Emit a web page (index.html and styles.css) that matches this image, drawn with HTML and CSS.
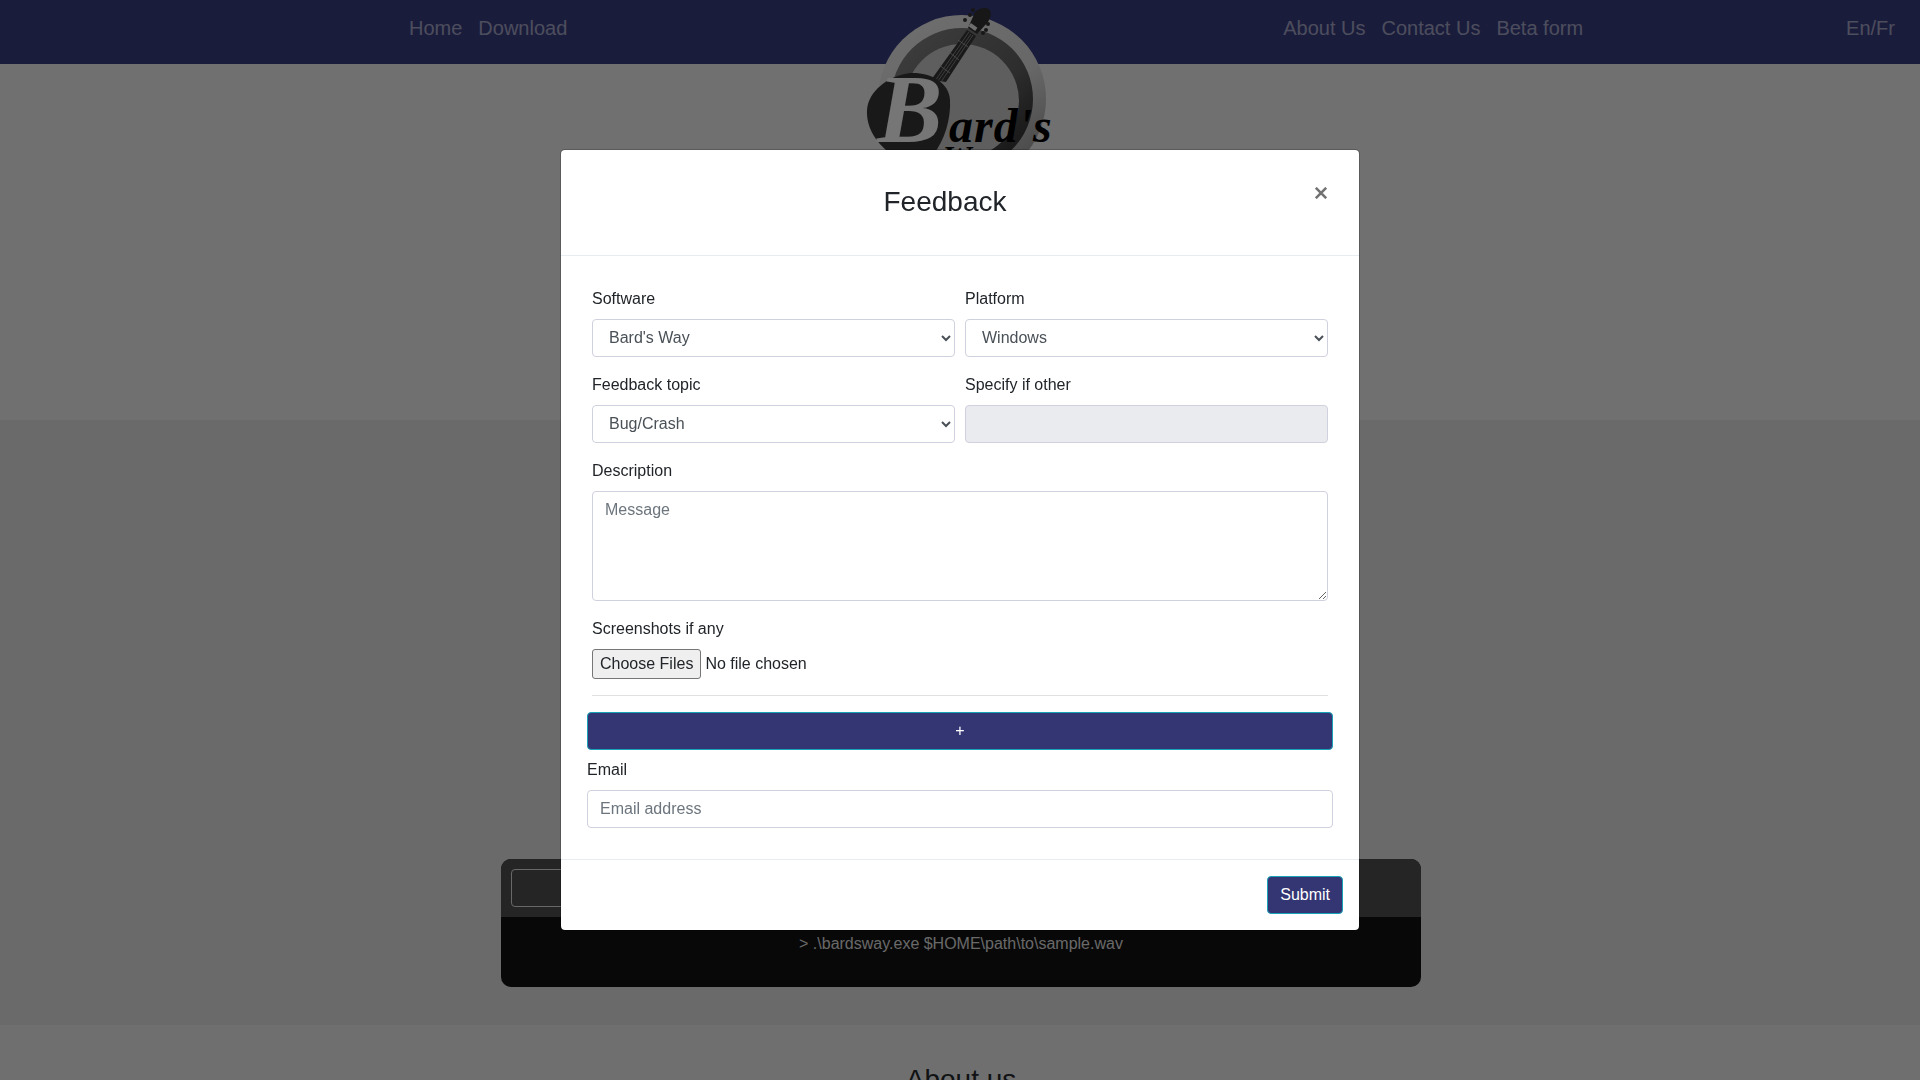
FILE: index.html
```html
<!DOCTYPE html>
<html lang="en">
<head>
<meta charset="utf-8">
<title>Bard's Way</title>
<link rel="stylesheet" href="styles.css">
</head>
<body>
<nav class="nav">
  <div class="nav-group nav-left">
    <a class="nav-link">Home</a>
    <a class="nav-link">Download</a>
  </div>
  <div class="nav-group nav-right">
    <a class="nav-link">About Us</a>
    <a class="nav-link">Contact Us</a>
    <a class="nav-link">Beta form</a>
  </div>
  <a class="nav-link nav-lang">En/Fr</a>
</nav>

<svg class="logo" viewBox="0 0 200 170" width="200" height="170" aria-label="Bard's Way logo">
  <defs>
    <linearGradient id="outer" x1="0.2" y1="0" x2="0.8" y2="1">
      <stop offset="0" stop-color="#dcdcdc"/>
      <stop offset="0.55" stop-color="#cfcfcf"/>
      <stop offset="1" stop-color="#8a8a8a"/>
    </linearGradient>
    <linearGradient id="ring" x1="0" y1="0" x2="1" y2="1">
      <stop offset="0" stop-color="#808080"/>
      <stop offset="0.6" stop-color="#5a5a5a"/>
      <stop offset="1" stop-color="#1c1c1c"/>
    </linearGradient>
  </defs>
  <circle cx="97" cy="99" r="84" fill="url(#outer)"/>
  <circle cx="97" cy="99" r="71" fill="url(#ring)"/>
  <circle cx="97" cy="101" r="57" fill="#bcbcbc"/>
  <path d="M66 80 L102 30 L111 36 L81 82 Z" fill="#333"/>
  <path d="M70 81 L104 32 M73 81 L106 34 M76 82 L108 35" stroke="#aaa" stroke-width=".6" fill="none"/>
  <path d="M74 65 L85 73 M84 52 L94 60 M93 40 L103 47" stroke="#aaa" stroke-width=".7"/>
  <path d="M103 28 L110 12 Q117 6 124 9 Q128 14 123 22 L112 34 Z" fill="#2e2e2e"/>
  <rect x="104" y="25" width="8" height="4" transform="rotate(35 108 27)" fill="#ddd"/>
  <g fill="#2e2e2e">
    <circle cx="100" cy="20" r="2"/><circle cx="105" cy="15" r="2"/><circle cx="108" cy="10" r="2"/>
    <circle cx="123" cy="24" r="2"/><circle cx="121" cy="30" r="2"/><circle cx="118" cy="33" r="2"/>
  </g>
  <path d="M45 73 C65 72 84 82 85 100 C86 118 80 140 68 155 L28 155 C12 145 1 128 2 110 C3 92 22 76 45 73 Z" fill="#333"/>
  <text class="logo-b" x="12" y="142">B</text>
  <text class="logo-ard" x="84" y="142">ard's</text>
  <text class="logo-way" x="78" y="168">Way</text>
</svg>

<header class="hero"></header>

<section class="band">
  <div class="term">
    <div class="term-head"><div class="term-field"></div></div>
    <div class="term-body">&gt; .\bardsway.exe $HOME\path\to\sample.wav</div>
  </div>
</section>

<section class="about">
  <h2 class="about-title">About us</h2>
</section>

<div class="backdrop">
  <div class="modal">
    <div class="modal-head">
      <h5 class="modal-title">Feedback</h5>
      <button class="close" type="button" aria-label="Close">
        <svg viewBox="0 0 12 12" width="12" height="12"><path d="M.8 .8 L11.200 11.200 M11.200 .8 L.8 11.200" fill="none" stroke="#000" stroke-width="2.600"/></svg>
      </button>
    </div>
    <form class="modal-body">
      <div class="inner">
        <div class="cols">
          <div class="field">
            <label class="label">Software</label>
            <select class="control choice"><option>Bard's Way</option></select>
          </div>
          <div class="field">
            <label class="label">Platform</label>
            <select class="control choice"><option>Windows</option></select>
          </div>
          <div class="field">
            <label class="label">Feedback topic</label>
            <select class="control choice"><option>Bug/Crash</option></select>
          </div>
          <div class="field">
            <label class="label">Specify if other</label>
            <input class="control" type="text" disabled>
          </div>
        </div>
        <div class="field">
          <label class="label">Description</label>
          <textarea class="control message" placeholder="Message"></textarea>
        </div>
        <div class="field field-file">
          <label class="label">Screenshots if any</label>
          <input class="file" type="file" multiple>
        </div>
        <hr class="rule">
      </div>
      <button class="btn btn-wide" type="button">+</button>
      <div class="field field-email">
        <label class="label">Email</label>
        <input class="control" type="email" placeholder="Email address">
      </div>
    </form>
    <div class="modal-foot">
      <button class="btn" type="button">Submit</button>
    </div>
  </div>
</div>
</body>
</html>
```

FILE: styles.css
```css
* { box-sizing: border-box; }
html, body { margin: 0; height: 1080px; overflow: hidden; }
body {
  font-family: "Liberation Sans", Arial, sans-serif;
  font-size: 16px;
  line-height: 24px;
  color: #212529;
  background: #dfdfdf;
}

/* page beneath the modal */
.nav {
  display: flex;
  height: 64px;
  padding: 13px 17px 0 401px;
  background: #343877;
  position: relative;
}
.nav-group { display: flex; }
.nav-right { margin-left: auto; margin-right: 247px; }
.nav-link {
  padding: 0 8px;
  font-size: 20px;
  line-height: 30px;
  color: rgba(255, 255, 255, .5);
}
.logo {
  position: absolute;
  left: 865px;
  top: 0;
  z-index: 1;
}
.logo-b { font: italic bold 98px "Liberation Serif", serif; fill: #ececec; }
.logo-ard { font: italic bold 48px "Liberation Serif", serif; fill: #000; letter-spacing: 1px; }
.logo-way { font: italic bold 32px "Liberation Serif", serif; fill: #000; }
.hero { height: 356px; background: #e0e0e0; }
.band {
  display: flex;
  justify-content: center;
  height: 605px;
  padding: 439px 0 0 2px;
  background: #d4d4d4;
}
.term {
  width: 920px;
  height: 128px;
  border-radius: 10px;
  overflow: hidden;
  background: #111;
}
.term-head {
  height: 58px;
  padding: 10px;
  background: #4b4b4b;
}
.term-field {
  width: 400px;
  height: 38px;
  border: 1px solid #d0d0d0;
  border-radius: 4px;
}
.term-body {
  padding-top: 15px;
  text-align: center;
  color: #d2d2d2;
}
.about { background: #dedede; padding: 37px 0 0 2px; }
.about-title {
  margin: 0;
  font-size: 28px;
  font-weight: 400;
  line-height: 36px;
  text-align: center;
  color: #212529;
}

/* modal */
.backdrop {
  position: fixed;
  inset: 0;
  z-index: 5;
  display: flex;
  justify-content: center;
  align-items: flex-start;
  padding-top: 149px;
  background: rgba(0, 0, 0, .5);
}
.modal {
  width: 800px;
  background: #fff;
  border: 1px solid rgba(0, 0, 0, .2);
  border-radius: 5px;
  background-clip: padding-box;
}
.modal-head {
  display: flex;
  align-items: flex-start;
  height: 106px;
  padding: 31px 32px 0 0;
  border-bottom: 1px solid #e9ecef;
}
.modal-title {
  flex: 1;
  margin: 0;
  padding-left: 17px;
  font-size: 28px;
  font-weight: 400;
  line-height: 42px;
  text-align: center;
}
.close {
  display: flex;
  margin: 6px 0 0 3px;
  padding: 0;
  border: 0;
  background: none;
  opacity: .55;
}
.modal-body { padding: 31px 26px; }
.inner { padding: 0 5px; }
.cols {
  display: grid;
  grid-template-columns: 363px 363px;
  column-gap: 10px;
}
.field { margin-bottom: 16px; }
.field-file { margin-bottom: 0; }
.field-email { margin: 8px 0 0; }
.label { display: block; margin-bottom: 8px; }
.control {
  display: block;
  width: 100%;
  height: 38px;
  padding: 6px 12px;
  font: inherit;
  color: #495057;
  background-color: #fff;
  border: 1px solid #d0d1de;
  border-radius: 4px;
}
.choice { padding: 5px 12px 7px; }
.control:disabled { background-color: #e9ebef; }
.control::placeholder { color: #6c757d; opacity: 1; }
.message { height: 110px; }
.file {
  display: block;
  width: 100%;
  height: 30px;
  font: inherit;
}
.file::file-selector-button {
  height: 30px;
  padding: 0 7px;
  background: #efefef;
  border: 1px solid #767676;
  border-radius: 3px;
  color: #212529;
}
.rule {
  height: 1px;
  margin: 16px 0;
  border: 0;
  background: #e0e0e0;
}
.btn {
  display: block;
  height: 38px;
  padding: 0 12px;
  font: inherit;
  color: #fff;
  background: #333673;
  border: 1px solid #17a2b8;
  border-radius: 4px;
}
.btn-wide { width: 100%; }
.modal-foot {
  display: flex;
  justify-content: flex-end;
  height: 71px;
  padding: 16px;
  border-top: 1px solid #e9ecef;
}
```
